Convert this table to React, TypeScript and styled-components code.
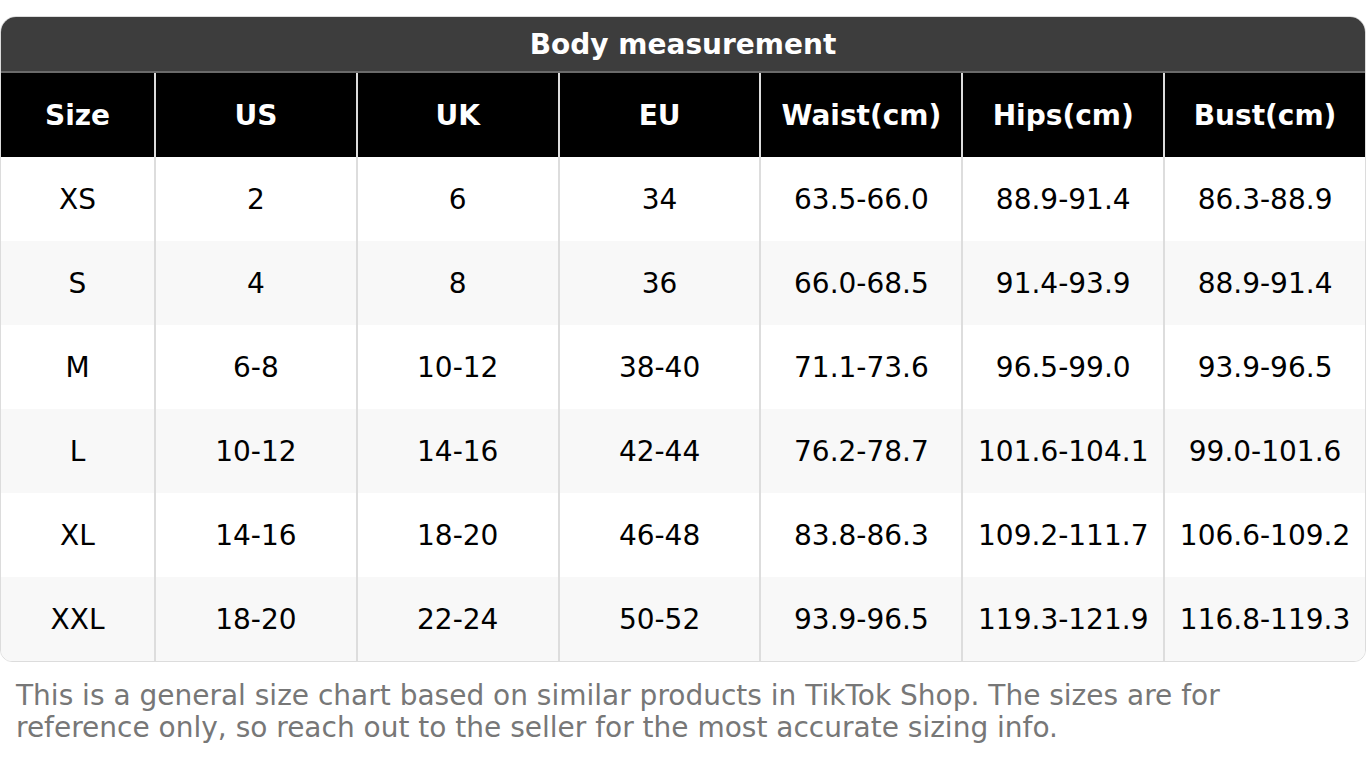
import React from "react";
import styled, { createGlobalStyle } from "styled-components";

const GlobalStyle = createGlobalStyle`
  html, body { margin: 0; padding: 0; background: #ffffff; }
  body { font-family: "DejaVu Sans", "Liberation Sans", sans-serif; }
`;

const Page = styled.div`
  padding-top: 16px;
`;

const Card = styled.div`
  border: 1px solid #dcdcdc;
  border-radius: 16px 16px 12px 12px;
  overflow: hidden;
  background: #ffffff;
`;

const Title = styled.div`
  height: 54px;
  background: #3d3d3d;
  color: #ffffff;
  font-weight: bold;
  font-size: 28px;
  display: flex;
  align-items: center;
  justify-content: center;
  border-bottom: 2px solid #6a6a6a;
`;

const Row = styled.div<{ $variant: "head" | "even" | "odd" }>`
  display: grid;
  grid-template-columns: 153px repeat(6, 1fr);
  height: 84px;
  background: ${(p) =>
    p.$variant === "head" ? "#000000" : p.$variant === "odd" ? "#f8f8f8" : "#ffffff"};
  color: ${(p) => (p.$variant === "head" ? "#ffffff" : "#000000")};
  font-weight: ${(p) => (p.$variant === "head" ? "bold" : "normal")};
  font-size: 28px;
`;

const Cell = styled.div<{ $head?: boolean }>`
  display: flex;
  align-items: center;
  justify-content: center;
  white-space: nowrap;
  & + & {
    border-left: 2px solid ${(p) => (p.$head ? "#6e6e6e" : "#dddddd")};
  }
`;

const Note = styled.p`
  margin: 18px 0 0;
  padding: 0 16px;
  color: #777777;
  font-size: 28px;
  line-height: 32px;
`;

const headers = ["Size", "US", "UK", "EU", "Waist(cm)", "Hips(cm)", "Bust(cm)"];
const rows = [
  ["XS", "2", "6", "34", "63.5-66.0", "88.9-91.4", "86.3-88.9"],
  ["S", "4", "8", "36", "66.0-68.5", "91.4-93.9", "88.9-91.4"],
  ["M", "6-8", "10-12", "38-40", "71.1-73.6", "96.5-99.0", "93.9-96.5"],
  ["L", "10-12", "14-16", "42-44", "76.2-78.7", "101.6-104.1", "99.0-101.6"],
  ["XL", "14-16", "18-20", "46-48", "83.8-86.3", "109.2-111.7", "106.6-109.2"],
  ["XXL", "18-20", "22-24", "50-52", "93.9-96.5", "119.3-121.9", "116.8-119.3"],
];

export default function App() {
  return (
    <Page>
      <GlobalStyle />
      <Card>
        <Title>Body measurement</Title>
        <Row $variant="head">
          {headers.map((h) => (
            <Cell key={h} $head>
              {h}
            </Cell>
          ))}
        </Row>
        {rows.map((r, i) => (
          <Row key={r[0]} $variant={i % 2 === 0 ? "even" : "odd"}>
            {r.map((c, j) => (
              <Cell key={j}>{c}</Cell>
            ))}
          </Row>
        ))}
      </Card>
      <Note>
        This is a general size chart based on similar products in TikTok Shop. The sizes are for
        reference only, so reach out to the seller for the most accurate sizing info.
      </Note>
    </Page>
  );
}
